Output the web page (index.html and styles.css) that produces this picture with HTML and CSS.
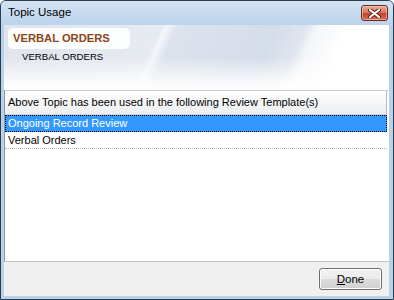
FILE: index.html
```html
<!DOCTYPE html>
<html lang="en">
<head>
  <meta charset="UTF-8">
  <title>Topic Usage</title>
  <link rel="stylesheet" href="styles.css">
</head>
<body>
  <div class="window">
    <div class="titlebar">
      <span class="title">Topic Usage</span>
      <button class="close" title="Close">
        <svg width="13" height="9" viewBox="0 0 13 9">
          <path d="M2 1 L11 8 M11 1 L2 8" stroke="#5a2016" stroke-width="4" stroke-linecap="round"/>
          <path d="M2 1 L11 8 M11 1 L2 8" stroke="#fff" stroke-width="2.2" stroke-linecap="round"/>
        </svg>
      </button>
    </div>

    <div class="client">
      <div class="banner">
        <div class="topic-box">VERBAL ORDERS</div>
        <div class="topic-sub">VERBAL ORDERS</div>
      </div>

      <div class="list">
        <div class="list-head">Above Topic has been used in the following Review Template(s)</div>
        <div class="row selected">Ongoing Record Review</div>
        <div class="row">Verbal Orders</div>
      </div>

      <div class="footer">
        <button class="btn"><u>D</u>one</button>
      </div>
    </div>
  </div>
</body>
</html>
```

FILE: styles.css
```css
body {
  margin: 0;
  font-family: "Liberation Sans", Arial, sans-serif;
  font-size: 11px;
  background: #fff;
}

.window {
  width: 394px;
  height: 300px;
  box-sizing: border-box;
  border: 1px solid #2b3a4c;
  border-radius: 6px 6px 0 0;
  background: #b9d1ea;
  display: flex;
  flex-direction: column;
  overflow: hidden;
}

.titlebar {
  height: 24px;
  display: flex;
  align-items: flex-start;
  justify-content: space-between;
  padding: 0 5px 0 7px;
  background: linear-gradient(to bottom, #d3e3f4, #bcd3eb);
}

.title {
  margin-top: 5px;
  font-size: 11.5px;
  color: #000;
}

.close {
  width: 27px;
  height: 16px;
  margin-top: 4px;
  padding: 0;
  border: 1px solid #6b2a1d;
  border-radius: 3px;
  background: linear-gradient(to bottom, #e9a995 0%, #d77a63 45%, #c2432b 55%, #d4735a 100%);
  display: flex;
  align-items: center;
  justify-content: center;
  box-shadow: inset 0 0 0 1px rgba(255, 220, 210, 0.5);
}

.close svg {
  display: block;
}

.client {
  flex: 1;
  margin: 0 4px 3px 3px;
  display: flex;
  flex-direction: column;
  background: #f0f0f0;
}

.banner {
  height: 65px;
  box-sizing: border-box;
  padding: 3px 0 0 4px;
  background:
    linear-gradient(to bottom, rgba(255, 255, 255, 0) 50%, rgba(255, 255, 255, 0.85) 90%, #fff 100%),
    linear-gradient(114deg, #e0e5ed 0%, #e6eaf1 38%, #f3f5f9 39.5%, #dde3ed 42%, #d5dde9 66%, #dfe5ee 73%, #f4f6f9 76%, #fff 84%, #fff 100%);
}

.topic-box {
  width: 117px;
  height: 21px;
  line-height: 21px;
  padding-left: 5px;
  border-radius: 5px;
  background: rgba(255, 255, 255, 0.92);
  color: #8b4513;
  font-weight: bold;
  font-size: 11.2px;
}

.topic-sub {
  margin: 2px 0 0 14px;
  font-size: 9.6px;
  color: #000;
}

.list {
  flex: 1;
  background: #fff;
  border-top: 1px solid #c9ced6;
  border-bottom: 1px solid #c4c4c4;
  border-left: 1px solid #8e979f;
}

.list-head {
  height: 23px;
  line-height: 23px;
  padding-left: 3px;
  margin-right: 2px;
  background: linear-gradient(to bottom, #ffffff, #f5f6f7 50%, #eceef0);
  border-right: 1px solid #b9bcc1;
  border-bottom: 1px solid #d5d5d5;
  color: #000;
}

.row {
  height: 16px;
  line-height: 16px;
  padding-left: 3px;
  margin-right: 2px;
  border-bottom: 1px dotted #b0b0b0;
  color: #000;
}

.row.selected {
  background: #3399ff;
  color: #fff;
  outline: 1px dotted #000;
  outline-offset: -1px;
}

.footer {
  height: 34px;
  display: flex;
  justify-content: flex-end;
  align-items: flex-start;
  padding-right: 7px;
}

.btn {
  margin-top: 6px;
  width: 63px;
  height: 22px;
  padding: 0;
  border: 1px solid #707070;
  border-radius: 3px;
  background: linear-gradient(to bottom, #f2f2f2 0%, #ebebeb 50%, #dddddd 51%, #cfcfcf 100%);
  box-shadow: inset 0 0 0 1px #fcfcfc;
  font-family: "Liberation Sans", Arial, sans-serif;
  font-size: 11.5px;
  color: #000;
}
```
